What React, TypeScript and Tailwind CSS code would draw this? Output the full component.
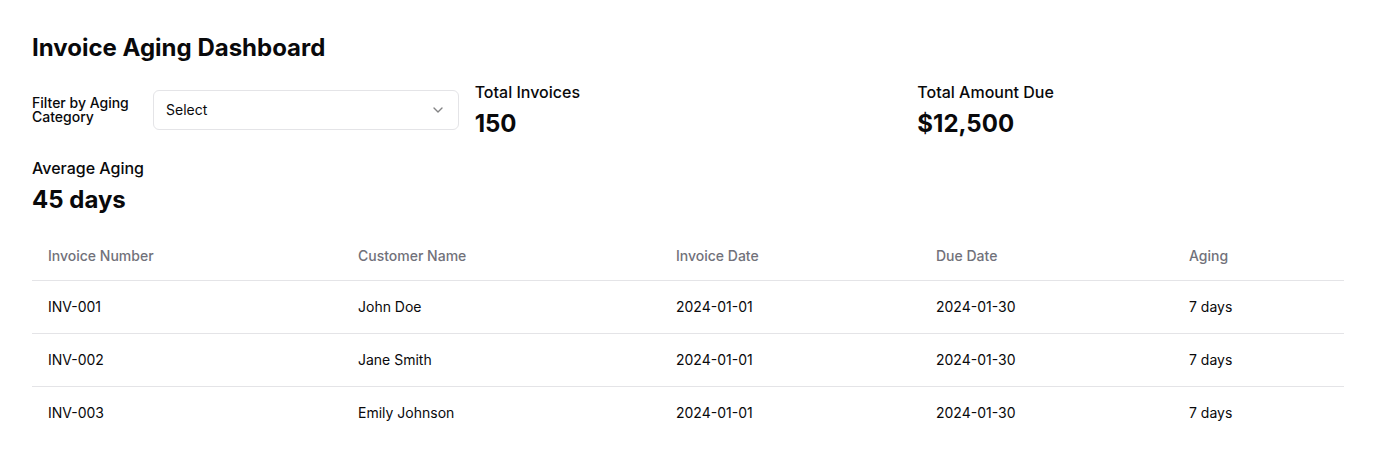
import { ChevronDown } from "lucide-react";

type Invoice = {
  number: string;
  customer: string;
  invoiceDate: string;
  dueDate: string;
  aging: string;
};

const invoices: Invoice[] = [
  { number: "INV-001", customer: "John Doe", invoiceDate: "2024-01-01", dueDate: "2024-01-30", aging: "7 days" },
  { number: "INV-002", customer: "Jane Smith", invoiceDate: "2024-01-01", dueDate: "2024-01-30", aging: "7 days" },
  { number: "INV-003", customer: "Emily Johnson", invoiceDate: "2024-01-01", dueDate: "2024-01-30", aging: "7 days" },
];

const Stat = ({ label, value }: { label: string; value: string }) => (
  <div className="flex flex-col gap-1">
    <p className="text-base font-medium leading-6">{label}</p>
    <p className="text-2xl font-bold leading-8">{value}</p>
  </div>
);

export default function App() {
  return (
    <div className="min-h-screen bg-white p-8 text-[#09090b] font-['Inter',sans-serif]">
      <div className="flex flex-col gap-4">
        <h1 className="text-2xl font-bold leading-8">Invoice Aging Dashboard</h1>

        {/* Filter + stats */}
        <div className="grid grid-cols-3 gap-4">
          <div className="flex items-center gap-4">
            <label className="w-[105px] shrink-0 text-sm font-medium leading-none">
              Filter by Aging Category
            </label>
            <button className="flex h-10 flex-1 items-center justify-between rounded-md border border-[#e4e4e7] bg-white px-3 text-sm">
              <span>Select</span>
              <ChevronDown className="size-4 opacity-50" />
            </button>
          </div>
          <Stat label="Total Invoices" value="150" />
          <Stat label="Total Amount Due" value="$12,500" />
          <Stat label="Average Aging" value="45 days" />
        </div>

        {/* Table */}
        <table className="w-full text-sm">
          <thead>
            <tr className="border-b border-[#e4e4e7]">
              <th className="h-12 w-[310px] px-4 text-left font-medium text-[#71717a]">Invoice Number</th>
              <th className="h-12 w-[318px] px-4 text-left font-medium text-[#71717a]">Customer Name</th>
              <th className="h-12 w-[260px] px-4 text-left font-medium text-[#71717a]">Invoice Date</th>
              <th className="h-12 w-[253px] px-4 text-left font-medium text-[#71717a]">Due Date</th>
              <th className="h-12 px-4 text-left font-medium text-[#71717a]">Aging</th>
            </tr>
          </thead>
          <tbody>
            {invoices.map((inv) => (
              <tr key={inv.number} className="border-b border-[#e4e4e7] last:border-0">
                <td className="p-4">{inv.number}</td>
                <td className="p-4">{inv.customer}</td>
                <td className="p-4">{inv.invoiceDate}</td>
                <td className="p-4">{inv.dueDate}</td>
                <td className="p-4">{inv.aging}</td>
              </tr>
            ))}
          </tbody>
        </table>
      </div>
    </div>
  );
}
